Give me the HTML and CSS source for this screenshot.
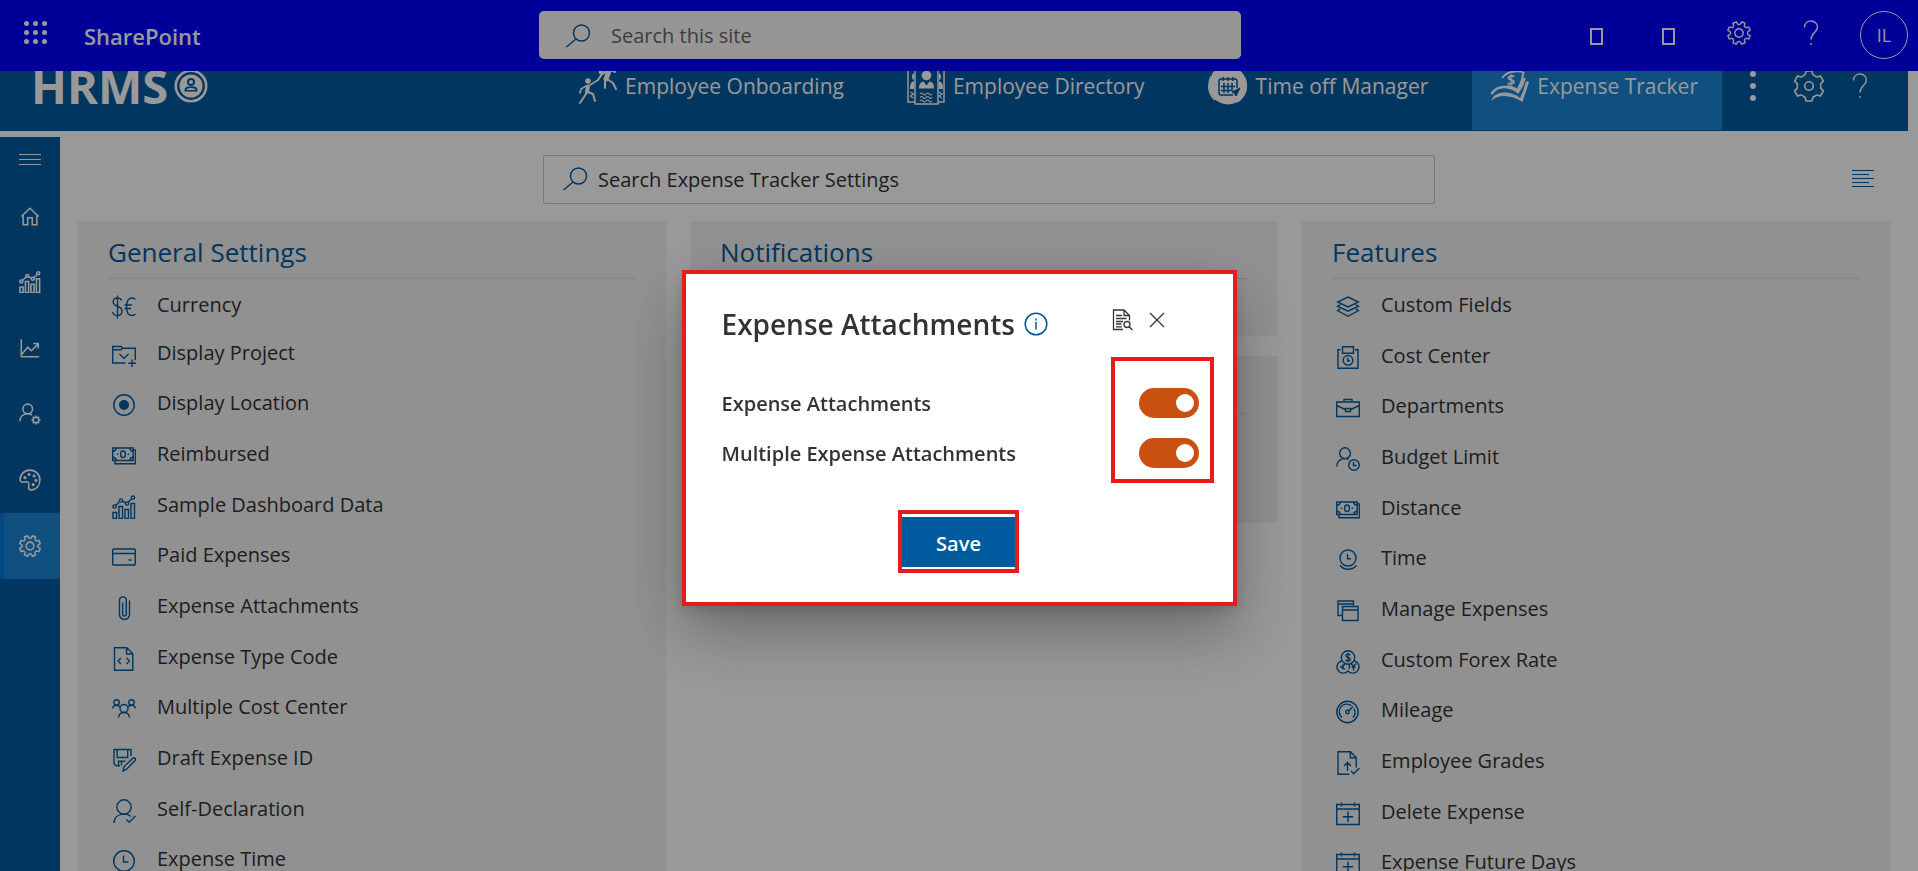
FILE: index.html
```html
<!DOCTYPE html>
<html lang="en">
<head>
<meta charset="utf-8">
<title>Expense Tracker Settings</title>
<link rel="stylesheet" href="styles.css">
</head>
<body>
<svg class="sprite" aria-hidden="true">
  <defs>
    <path id="tooth8" d="M-3.3-7.9Q-2.4-8.2-2.2-8.8L-1.8-11.3H1.8L2.2-8.8Q2.4-8.2 3.3-7.9"/>
    <path id="tooth6" d="M-5.6-9.7Q-3.9-9.9-3.5-11L-2.7-14H2.7L3.5-11Q3.9-9.9 5.6-9.7"/>
  </defs>
  <symbol id="gear8" viewBox="-12 -12 24 24">
    <g transform="rotate(22.5)"><use href="#tooth8"/><use href="#tooth8" transform="rotate(45)"/><use href="#tooth8" transform="rotate(90)"/><use href="#tooth8" transform="rotate(135)"/><use href="#tooth8" transform="rotate(180)"/><use href="#tooth8" transform="rotate(225)"/><use href="#tooth8" transform="rotate(270)"/><use href="#tooth8" transform="rotate(315)"/></g>
    <circle r="4.2"/>
  </symbol>
  <symbol id="gear6" viewBox="-15 -15 30 30">
    <use href="#tooth6"/><use href="#tooth6" transform="rotate(60)"/><use href="#tooth6" transform="rotate(120)"/><use href="#tooth6" transform="rotate(180)"/><use href="#tooth6" transform="rotate(240)"/><use href="#tooth6" transform="rotate(300)"/>
    <circle r="4"/>
  </symbol>
  <symbol id="help" viewBox="0 0 16 26"><path d="M1.5 7.5C1.5 3.5 4.3 1 8 1s6.500 2.500 6.500 6C14.500 12.500 8 12.500 8 19.500"/><path d="M8 23v2"/></symbol>
  <symbol id="search" viewBox="0 0 26 24"><circle cx="16.500" cy="9" r="8"/><path d="M11 15L1.500 23"/></symbol>
  <symbol id="home" viewBox="0 0 24 24"><path d="M2.500 12.500L12 3.500l9.500 9M4.500 11v10.500h5V14h5v7.500h5V11"/></symbol>
  <symbol id="chart" viewBox="0 0 24 24"><path d="M1 17.500h3.500v6H1zM7 11.500h3.500v12H7zM13 14.500h3.500v9H13zM19 8.500h3.500v15H19z"/><circle cx="2.500" cy="11.500" r="1.600"/><circle cx="9" cy="5.500" r="1.600"/><circle cx="15" cy="8.500" r="1.600"/><circle cx="21" cy="2.500" r="1.600"/><path d="M3.700 10.400l4-3.800M10.500 6.200l3 1.600M16.200 7.300l3.700-3.700"/></symbol>
  <symbol id="trend" viewBox="0 0 24 24"><path d="M2.500 2.500v19H22M3 19l6.500-8 4 4L21 7.500M15.500 7H21v5.500"/></symbol>
  <symbol id="person-gear" viewBox="0 0 24 24"><circle cx="9.500" cy="6.500" r="5.300"/><path d="M1 20c0-5 3.500-8.200 8.500-8.200 2 0 3.500.5 4.700 1.400"/><circle cx="18.500" cy="18.500" r="3"/><path d="M18.500 13.500v2m0 6v2m-5-5h2m6 0h2m-8.500-3.500l1.400 1.400m4.200 4.200l1.400 1.400m0-7l-1.400 1.400m-4.200 4.200L15 22"/></symbol>
  <symbol id="palette" viewBox="0 0 24 24"><path d="M12 1.200c6.200 0 10.800 4.600 10.800 10.800S19 22.800 13.500 22.800c-2.200 0-3.300-1.200-3-3 .3-1.600.6-3 .1-4.200-.7-1.800-2.600-2-4.600-1.500-2.800.7-4.800 0-4.800-2.300C1.200 5.800 5.800 1.200 12 1.200z"/><g fill="currentColor"><circle cx="6.500" cy="9.500" r=".9"/><circle cx="11" cy="6" r=".9"/><circle cx="16.500" cy="7.500" r=".9"/><circle cx="18.500" cy="12.500" r=".9"/><circle cx="15.500" cy="17" r=".9"/></g></symbol>
  <symbol id="currency" viewBox="0 0 24 24"><path d="M9.500 5.500C9 3.800 7.500 3 5.500 3 3 3 1.200 4.500 1.200 7c0 5.500 8.800 3 8.800 9 0 2.800-2 4.500-4.700 4.500C2.800 20.500 1 19.200.8 17M5.500.5v23M23.500 4.500C22.500 3.400 21.300 3 20 3c-4 0-5.500 4-5.500 8.800s1.500 8.700 5.500 8.700c1.300 0 2.500-.4 3.500-1.500M12.500 10h7.500M12.500 13.500h6.500"/></symbol>
  <symbol id="folder" viewBox="0 0 24 24"><path d="M13.500 20H.7V3.500h8.500l1.300 1.700h12.800v12M.7 6.800h8.500l1.300-1.600M7.500 11l4.500 4.300 4.500-4.300M20 16.500v7.500M16.300 20.200H24"/></symbol>
  <symbol id="radio" viewBox="0 0 24 24"><circle cx="12" cy="12" r="10.200"/><circle cx="12" cy="12" r="4.300" fill="currentColor"/></symbol>
  <symbol id="money" viewBox="0 0 24 24"><path d="M.7 4h20.500v12.500H.7zM21.200 6h2.200v13.800H3v-3.300M.7 7.500Q4 7.200 4.200 4M17.700 4Q18 7.200 21.200 7.500M.7 13Q4 13.300 4.200 16.500M17.700 16.500Q18 13.300 21.200 13M4.800 10.200h1.400M15.700 10.200h1.400"/><rect x="8.700" y="7" width="4.600" height="6.500" rx="2.300"/></symbol>
  <symbol id="card" viewBox="0 0 24 24"><rect x=".7" y="4" width="22.600" height="16" rx="1"/><path d="M.7 8.500h22.600M16.500 15h3"/></symbol>
  <symbol id="clip" viewBox="0 0 24 24"><path d="M17.500 4.500v14a5 5 0 0 1-10 0V4.300a3.400 3.400 0 0 1 6.800 0v14a1.800 1.800 0 0 1-3.600 0V6.500"/></symbol>
  <symbol id="code-file" viewBox="0 0 24 24"><path d="M2.500.7h12.300l6 6v16.600H2.500zM14.500.7v6.300h6.300M9 11l-3 3 3 3M14.500 11l3 3-3 3"/></symbol>
  <symbol id="people" viewBox="0 0 24 24"><circle cx="12" cy="11.500" r="4"/><path d="M6.500 20.500c.3-3 2.400-5 5.500-5s5.200 2 5.500 5"/><circle cx="4.500" cy="5.500" r="2.700"/><circle cx="19.500" cy="5.500" r="2.700"/><path d="M.7 11.500c.2-2 1.700-3.300 3.800-3.300 1.600 0 2.800.7 3.500 1.900M23.300 11.500c-.2-2-1.700-3.300-3.800-3.300-1.600 0-2.800.7-3.500 1.900"/></symbol>
  <symbol id="save-edit" viewBox="0 0 24 24"><path d="M19 8V1.500H2v14.200l2.200 2.200H8M5.200 1.500v8h10.500v-8M6.500 17.500v-4.300h7M9.500 14v3.500M11 23l1-4.200 9-8.800c1.500-1 3.300 1 2 2.500l-8.600 9z"/></symbol>
  <symbol id="person-check" viewBox="0 0 24 24"><circle cx="12" cy="8" r="7.200"/><path d="M2 24c0-5.500 4-8.900 10-8.900 3 0 5.300.8 7 2.300M14.500 20.500l2.700 2.700 6.300-6.300"/></symbol>
  <symbol id="clock" viewBox="0 0 24 24"><circle cx="12" cy="12" r="10.300"/><path d="M11.500 6.500v6.500h5"/></symbol>
  <symbol id="layers" viewBox="0 0 24 24"><path d="M12 2l10.500 5L12 12 1.500 7zM4.500 9.500l-3 1.700L12 16.200l10.500-5-3-1.700M4.500 13.800l-3 1.700L12 21.300l10.500-5.800-3-1.700"/></symbol>
  <symbol id="cost" viewBox="0 0 24 24"><path d="M4.500 3.700H2v18.500h20V3.700h-3M6.500.8h11v6.500h-11z"/><circle cx="12" cy="14.300" r="4.800"/><path d="M11.700 11.800v2.900h2.300"/></symbol>
  <symbol id="case" viewBox="0 0 24 24"><path d="M.7 6h22.600v14.500H.7zM8 6V3.500h8V6M.7 9.500l8.800 4.200M23.300 9.500l-8.800 4.200M9.500 12.500h5V15.500h-5z"/></symbol>
  <symbol id="person-clock" viewBox="0 0 24 24"><circle cx="9" cy="6.200" r="5.400"/><path d="M.7 19.500c0-5 3.300-7.900 8.300-7.900 1.500 0 2.800.3 3.800.8"/><circle cx="18" cy="18" r="5.300"/><path d="M17.500 15v3.500H20.500"/></symbol>
  <symbol id="time" viewBox="0 0 24 24"><circle cx="12" cy="10" r="8"/><path d="M11.500 6v4.700h3.500M4 17.500c4 5 12 5 16.500 0"/></symbol>
  <symbol id="windows" viewBox="0 0 24 24"><path d="M6 16.500H2V2h15.500v4.500M2 5h15.500M6.500 7.500h15.500v14H6.500zM6.500 11h15.500"/></symbol>
  <symbol id="forex" viewBox="0 0 24 24"><circle cx="12" cy="7.500" r="6.700"/><path d="M5.800 10.700a6.300 6.300 0 1 0 6.200 10.300 6.300 6.300 0 1 0 6.200-10.300M14.300 5.200C13.500 3.700 9.800 3.700 9.800 5.700s4.600 1.500 4.600 3.600-3.900 2.200-4.900.5M12 2.700v9.500M9 15c-3-1.200-4.500 4.500 0 4M4 17h4M15 13.500l2.500 3 2.500-3M17.500 16.500v4M15.500 17h4M13.300 14.500v4.500"/></symbol>
  <symbol id="gauge" viewBox="0 0 24 24"><circle cx="11.500" cy="12" r="10.700"/><path d="M6 17.500a7.500 7.500 0 0 1 9.500-11.700M17.800 8.500a7.500 7.500 0 0 1-.8 9M12.700 10.800L17 6.500"/><circle cx="11.500" cy="12" r="1.700"/></symbol>
  <symbol id="grade" viewBox="0 0 24 24"><path d="M13.500 23.200H2V.8h12.500l5.700 5.700v10M14.300.8v6h6M11.500 20v-8.500M8 15l3.500-3.700L15 15M15 20l2.700 2.700 5.800-5.800"/></symbol>
  <symbol id="cal-add" viewBox="0 0 24 24"><path d="M.7 2.500h22.600v20H.7zM.7 7h22.600M5.500.5v4M18.500.5v4M12 9.500v10.500M6.800 14.700h10.400"/></symbol>
</svg>

<header class="suite-bar">
  <button class="icon-btn waffle" aria-label="App launcher"><svg width="24" height="24" viewBox="0 0 24 24" fill="currentColor"><circle cx="2.500" cy="2.500" r="2.500"/><circle cx="11.500" cy="2.500" r="2.500"/><circle cx="20.500" cy="2.500" r="2.500"/><circle cx="2.500" cy="11.500" r="2.500"/><circle cx="11.500" cy="11.500" r="2.500"/><circle cx="20.500" cy="11.500" r="2.500"/><circle cx="2.500" cy="20.500" r="2.500"/><circle cx="11.500" cy="20.500" r="2.500"/><circle cx="20.500" cy="20.500" r="2.500"/></svg></button>
  <a class="suite-name" href="#">SharePoint</a>
  <label class="site-search"><svg class="ico" width="26" height="24"><use href="#search"/></svg><input type="text" placeholder="Search this site" aria-label="Search this site"></label>
  <div class="suite-actions">
    <button class="icon-btn glyph" aria-label="Chat"><span class="tofu"></span></button>
    <button class="icon-btn glyph" aria-label="Notifications"><span class="tofu"></span></button>
    <button class="icon-btn raised" aria-label="Settings"><svg class="ico" width="24" height="24"><use href="#gear8"/></svg></button>
    <button class="icon-btn raised" aria-label="Help"><svg class="ico" width="16" height="26"><use href="#help"/></svg></button>
    <button class="avatar">IL</button>
  </div>
</header>

<div class="app-bar">
  <a class="brand" href="#">HRMS<svg width="34" height="34" viewBox="0 0 34 34"><circle cx="17" cy="17" r="15.200" fill="none" stroke="currentColor" stroke-width="2.600"/><circle cx="17" cy="17" r="11.500" fill="currentColor"/><g fill="#005a9e"><circle cx="17" cy="13" r="4"/><path d="M10.500 22.500c0-5 2-5 6.500-5s6.500 0 6.500 5z"/></g><circle cx="17" cy="13" r="2" fill="currentColor"/><path d="M12.500 21q0-2 4.500-2t4.500 2z" fill="currentColor"/></svg></a>
  <nav class="app-nav">
    <a href="#"><svg width="40" height="40" viewBox="0 0 40 40" fill="none" stroke="currentColor" stroke-linecap="round" stroke-linejoin="round"><circle cx="23.500" cy="6" r="2.800" fill="currentColor" stroke="none"/><circle cx="10" cy="15" r="2.800" fill="currentColor" stroke="none"/><path d="M31 5l-3 8" stroke-width="5"/><path d="M30 5l-6 3-4 6M33 4l4 2" stroke-width="2"/><path d="M27 14l0 8M29 13l6 4 3 6" stroke-width="2"/><path d="M10 20.500l-1 5" stroke-width="4"/><path d="M12 19l8-5M8 20l-5 3-1 4" stroke-width="1.600"/><path d="M9 26l-3 5-4 6M10 26l5 2 2 7" stroke-width="2"/></svg>Employee Onboarding</a>
    <a href="#"><svg width="40" height="40" viewBox="0 0 40 40" fill="none" stroke="currentColor" stroke-width="1.500"><path d="M9 2h23v36H9zM9 2H2v34h7M32 2h6v34h-6"/><g fill="currentColor" stroke="none"><circle cx="20.500" cy="9.500" r="4.800"/><path d="M13 22.500c0-5 2-6.500 4.500-7l3 4 3-4c3 .5 4.500 2 4.500 7zM8 7a4 4 0 0 0 0 7zM33 7a4 4 0 0 1 0 7zM8 15c-3 1-4 3-4 8h4zM33 15c3 1 4 3 4 8h-4z"/></g><path d="M14 28q1.500-2 3 0t3 0 3 0 3 0M14 31.500q1.500-2 3 0t3 0 3 0 3 0M14 35q1.500-2 3 0t3 0 3 0 3 0M4.500 26l3 2-3 2 3 2M33 26l3 2-3 2 3 2" stroke-width="1.200"/></svg>Employee Directory</a>
    <a href="#"><svg width="42" height="40" viewBox="0 0 42 40"><circle cx="21" cy="19.500" r="19" fill="currentColor"/><path d="M4 10Q-2 25 8 34M9 4l-4 5M31 4q13 12 6 25-3 5-7 7" fill="none" stroke="currentColor" stroke-width="1.500"/><g fill="none" stroke="#005a9e" stroke-width="1.500"><path d="M26 29H14q-2 0-2-2V15q0-2 2-2h14q2 0 2 2v7M16 11v4M21 11v4M26 11v4M14 20.500h14M14 24.500h11M17 17v10M21 17v10M25 17v8"/><path d="M25 26l8-4-4 8-2-3z" fill="#005a9e" stroke-width="1"/></g></svg>Time off Manager</a>
    <a class="active" href="#"><svg width="40" height="40" viewBox="0 0 40 40" fill="none" stroke="currentColor"><path d="M12 12Q17 5.500 25 5.500q5-.5 8.500 1Q32 16 27.500 24q-4-3-11-4" stroke-width="1.800"/><path d="M1.500 28Q6 20.500 15 21q7 .3 13 5 4.500-6 6.500-14" stroke-width="2.600"/><path d="M1 35Q3 27 14 26.500q9 0 16 5.500 4-8 6-17l3 1-6.500 20Q24 30 14 30 6 30 1 35z" fill="currentColor" stroke="none"/><text x="17" y="19" class="nav-dollar" fill="currentColor" stroke="none">$</text></svg>Expense Tracker</a>
  </nav>
  <div class="app-actions">
    <button class="icon-btn" aria-label="More"><svg width="8" height="30" viewBox="0 0 8 30" fill="currentColor"><circle cx="4" cy="3" r="3"/><circle cx="4" cy="15" r="3"/><circle cx="4" cy="27" r="3"/></svg></button>
    <button class="icon-btn" aria-label="App settings"><svg class="ico ico-bold" width="32" height="32"><use href="#gear6"/></svg></button>
    <button class="icon-btn" aria-label="App help"><svg class="ico" width="16" height="26"><use href="#help"/></svg></button>
  </div>
</div>

<div class="body">
  <nav class="rail">
    <button class="icon-btn burger" aria-label="Menu"><span></span><span></span><span></span></button>
    <a href="#" aria-label="Home"><svg class="ico"><use href="#home"/></svg></a>
    <a href="#" aria-label="Dashboard"><svg class="ico"><use href="#chart"/></svg></a>
    <a href="#" aria-label="Reports"><svg class="ico"><use href="#trend"/></svg></a>
    <a href="#" aria-label="Users"><svg class="ico"><use href="#person-gear"/></svg></a>
    <a href="#" aria-label="Theme"><svg class="ico"><use href="#palette"/></svg></a>
    <a class="active" href="#" aria-label="Settings"><svg class="ico"><use href="#gear8"/></svg></a>
  </nav>
  <main>
    <div class="toolbar">
      <label class="settings-search"><svg class="ico" width="26" height="24"><use href="#search"/></svg><input type="text" placeholder="Search Expense Tracker Settings" aria-label="Search Expense Tracker Settings"></label>
      <button class="icon-btn align-btn" aria-label="View"><svg width="22" height="18" viewBox="0 0 22 18" fill="none" stroke="currentColor"><path d="M0 1.500h22M0 5.500h17M0 9.500h22M0 13.500h17M0 17.500h22"/></svg></button>
    </div>
    <div class="columns">
      <section class="card">
        <h2>General Settings</h2>
        <ul class="tight-first">
          <li><a href="#"><svg class="ico"><use href="#currency"/></svg>Currency</a></li>
          <li><a href="#"><svg class="ico"><use href="#folder"/></svg>Display Project</a></li>
          <li><a href="#"><svg class="ico"><use href="#radio"/></svg>Display Location</a></li>
          <li><a href="#"><svg class="ico"><use href="#money"/></svg>Reimbursed</a></li>
          <li><a href="#"><svg class="ico"><use href="#chart"/></svg>Sample Dashboard Data</a></li>
          <li><a href="#"><svg class="ico"><use href="#card"/></svg>Paid Expenses</a></li>
          <li><a href="#"><svg class="ico"><use href="#clip"/></svg>Expense Attachments</a></li>
          <li><a href="#"><svg class="ico"><use href="#code-file"/></svg>Expense Type Code</a></li>
          <li><a href="#"><svg class="ico"><use href="#people"/></svg>Multiple Cost Center</a></li>
          <li><a href="#"><svg class="ico"><use href="#save-edit"/></svg>Draft Expense ID</a></li>
          <li><a href="#"><svg class="ico"><use href="#person-check"/></svg>Self-Declaration</a></li>
          <li><a href="#"><svg class="ico"><use href="#clock"/></svg>Expense Time</a></li>
        </ul>
      </section>
      <div class="stack">
        <section class="card card-small"><h2>Notifications</h2></section>
        <section class="card card-medium"><h2></h2></section>
      </div>
      <section class="card">
        <h2>Features</h2>
        <ul>
          <li><a href="#"><svg class="ico"><use href="#layers"/></svg>Custom Fields</a></li>
          <li><a href="#"><svg class="ico"><use href="#cost"/></svg>Cost Center</a></li>
          <li><a href="#"><svg class="ico"><use href="#case"/></svg>Departments</a></li>
          <li><a href="#"><svg class="ico"><use href="#person-clock"/></svg>Budget Limit</a></li>
          <li><a href="#"><svg class="ico"><use href="#money"/></svg>Distance</a></li>
          <li><a href="#"><svg class="ico"><use href="#time"/></svg>Time</a></li>
          <li><a href="#"><svg class="ico"><use href="#windows"/></svg>Manage Expenses</a></li>
          <li><a href="#"><svg class="ico"><use href="#forex"/></svg>Custom Forex Rate</a></li>
          <li><a href="#"><svg class="ico"><use href="#gauge"/></svg>Mileage</a></li>
          <li><a href="#"><svg class="ico"><use href="#grade"/></svg>Employee Grades</a></li>
          <li><a href="#"><svg class="ico"><use href="#cal-add"/></svg>Delete Expense</a></li>
          <li><a href="#"><svg class="ico"><use href="#cal-add"/></svg>Expense Future Days</a></li>
        </ul>
      </section>
    </div>
  </main>
</div>

<div class="overlay">
  <div class="dialog" role="dialog" aria-labelledby="dlg-title">
    <div class="dialog-head">
      <h1 id="dlg-title">Expense Attachments</h1>
      <button class="icon-btn info" aria-label="Info"><svg width="24" height="24" viewBox="0 0 24 24" fill="none" stroke="currentColor" stroke-width="1.500"><circle cx="12" cy="12" r="10.800"/><path d="M12 10v7.500M12 6.500v2"/></svg></button>
      <div class="dialog-tools">
        <button class="icon-btn" aria-label="Preview"><svg width="22" height="22" viewBox="0 0 22 22" fill="none" stroke="currentColor" stroke-width="1.300"><path d="M11 20.500H1.500V1H12l5.500 5.500v5M12 1v5.500h5.500M4 6.500h6M4 9.500h10.500M4 12.500h7M4 15h5.500M4 17.800h6"/><circle cx="15" cy="15.500" r="3"/><path d="M17.200 17.700l3.300 3.300"/></svg></button>
        <button class="icon-btn" aria-label="Close"><svg width="16" height="16" viewBox="0 0 16 16" fill="none" stroke="currentColor" stroke-width="1.300"><path d="M1 1l14 14M15 1L1 15"/></svg></button>
      </div>
    </div>
    <div class="fields">
      <div class="field"><label for="att">Expense Attachments</label><input class="switch" id="att" type="checkbox" role="switch" checked></div>
      <div class="field"><label for="multi">Multiple Expense Attachments</label><input class="switch" id="multi" type="checkbox" role="switch" checked></div>
    </div>
    <div class="dialog-foot"><span class="mark"><button class="save">Save</button></span></div>
  </div>
</div>
</body>
</html>
```
FILE: styles.css
```css
*, ::before, ::after { box-sizing: border-box; }

body {
  margin: 0;
  height: 100vh;
  overflow: hidden;
  display: flex;
  flex-direction: column;
  background: #fff;
  color: #333;
  font: 20px/28px "Open Sans", "Noto Sans", sans-serif;
}

a { color: inherit; text-decoration: none; }
input, button { font: inherit; color: inherit; }
.sprite { position: absolute; width: 0; height: 0; }

.ico {
  flex: none;
  width: 24px;
  height: 24px;
  fill: none;
  stroke: currentColor;
  stroke-width: 1.4;
}
.ico[width="26"] { width: 26px; }
.ico[width="16"] { width: 16px; height: 26px; }
.ico-bold { width: 32px; height: 32px; stroke-width: 1.5; }

.icon-btn {
  display: flex;
  align-items: center;
  justify-content: center;
  padding: 0;
  border: 0;
  background: none;
}

/* Suite bar */
.suite-bar {
  position: relative;
  z-index: 1;
  flex: none;
  display: grid;
  grid-template-columns: 60px 479px minmax(0, 702px) 1fr;
  align-items: center;
  height: 71px;
  padding-bottom: 1px;
  background: #00f;
  color: #fff;
}
.waffle { margin: 0 0 4px 12px; }
.suite-name { margin-left: 24px; padding-top: 2px; font-size: 22px; font-weight: 600; }
.site-search {
  display: flex;
  align-items: center;
  gap: 20px;
  height: 48px;
  padding: 2px 26px 0;
  border-radius: 5px;
  background: #fafafa;
  color: #005a9e;
}
.site-search input,
.settings-search input {
  flex: 1;
  min-width: 0;
  padding: 0;
  border: 0;
  outline: 0;
  background: none;
  color: #333;
}
.site-search input::placeholder { color: #666; opacity: 1; }
.suite-actions { display: flex; justify-content: flex-end; align-items: center; padding-right: 10px; }
.suite-actions .icon-btn { width: 72px; }
.suite-actions .raised { margin-bottom: 4px; }
.glyph { padding: 2px 0 0 2px; }
.tofu { width: 13px; height: 17px; border: 2px solid #fff; }
.avatar {
  width: 48px;
  height: 48px;
  margin-left: 13px;
  padding: 0;
  border: 1px solid #fff;
  border-radius: 50%;
  background: none;
  font-size: 18px;
}

/* Application bar, tucked under the suite bar */
.app-bar {
  flex: none;
  display: flex;
  align-items: stretch;
  height: 90px;
  margin: -30px 10px 0 0;
  padding-bottom: 1px;
  background: #005a9e;
  color: #fff;
}
.brand { display: flex; align-items: center; gap: 6px; padding-left: 31px; font-size: 47px; font-weight: 700; }
.app-nav { display: flex; gap: 20px; margin-left: auto; font-size: 21px; }
.app-nav a { display: flex; align-items: center; gap: 7px; padding: 0 24px 0 18px; }
.app-nav .active { background: #1c85d7; }
.nav-dollar { font-size: 14px; font-weight: 700; }
.app-actions { display: flex; align-items: center; gap: 36px; padding: 0 40px 0 27px; }
.app-actions .icon-btn:nth-child(2) { margin-right: -9px; }

/* Body */
.body { flex: 1; min-height: 0; display: flex; margin-top: 6px; padding-right: 10px; }
.rail { flex: none; width: 60px; background: #005a9e; color: #fff; }
.rail a { display: flex; align-items: center; justify-content: center; height: 66px; }
.rail .ico { width: 22px; height: 22px; stroke-width: 1.7; }
.rail .active {
  padding-right: 4px;
  border-left: 4px solid #0078d4;
  border-radius: 3px;
  background: #1c85d7;
}
.burger { width: 60px; height: 46px; flex-direction: column; gap: 4px; padding-top: 0; padding-bottom: 2px; }
.burger span { width: 22px; height: 1px; background: #fff; }

main { flex: 1; min-width: 0; padding: 18px; }
.toolbar {
  display: grid;
  grid-template-columns: 1fr minmax(0, 892px) 1fr;
  align-items: center;
  padding-left: 10px;
  color: #005a9e;
}
.settings-search {
  grid-column: 2;
  display: flex;
  align-items: center;
  gap: 10px;
  height: 49px;
  padding: 1px 18px 0;
  border: 1px solid #c8c8c8;
  border-radius: 2px;
}
.settings-search .ico { margin-bottom: 3px; }
.settings-search input::placeholder { color: #333; opacity: 1; }
.align-btn { justify-self: end; margin: 0 16px 4px 0; }

.columns { display: grid; grid-template-columns: repeat(3, 1fr); gap: 24px; margin-top: 17px; }
.stack { display: flex; flex-direction: column; gap: 20px; }
.card { padding: 0 30px; background: #f2f2f2; }
.card h2 {
  height: 58px;
  margin: 0;
  padding-top: 14px;
  border-bottom: 1px solid #d8d8d8;
  color: #005a9e;
  font-size: 26px;
  font-weight: 400;
  line-height: 34px;
}
.card-small { height: 115px; }
.card-medium { height: 167px; }
.card ul { margin: 0; padding: 0; list-style: none; }
.card li { height: 51px; padding-top: 12px; }
.card li:nth-child(3n + 2) { height: 50px; }
.card .tight-first li:first-child { height: 48px; }
.card li a { display: flex; align-items: flex-start; gap: 21px; padding-left: 4px; }
.card li .ico { margin-top: 4px; color: #005a9e; }

/* Dialog */
.overlay {
  position: fixed;
  inset: 0;
  z-index: 2;
  display: flex;
  align-items: center;
  justify-content: center;
  padding-top: 5px;
  background: rgba(0, 0, 0, .4);
}
.dialog {
  width: min(555px, 100%);
  padding: 32px 19px 29px 36px;
  border: 4px solid #e81a1c;
  background: #fff;
  box-shadow: 0 26px 58px rgba(0, 0, 0, .3), 0 5px 14px rgba(0, 0, 0, .14);
}
.dialog-head { display: flex; align-items: center; height: 36px; }
.dialog-head h1 { margin: 0; font-size: 28px; font-weight: 600; line-height: 36px; }
.info { margin: 0 0 0 9px; color: #005a9e; }
.dialog-tools { display: flex; align-items: center; gap: 15px; margin: 0 49px 9px auto; }

.fields {
  position: relative;
  display: grid;
  gap: 20px;
  margin-top: 46px;
  padding-right: 15px;
}
/* red frame round the switches */
.fields::after {
  content: "";
  position: absolute;
  top: -31px;
  right: 0;
  width: 103px;
  height: 126px;
  border: 4px solid #e81a1c;
  pointer-events: none;
}
.field { display: flex; align-items: center; justify-content: space-between; height: 30px; font-weight: 600; }
.field label { padding-top: 1px; }
.switch {
  appearance: none;
  display: flex;
  justify-content: flex-end;
  align-items: center;
  width: 60px;
  height: 30px;
  margin: 0;
  padding: 0 5px;
  border-radius: 15px;
  background: #ca5010;
}
.switch::before { content: ""; width: 18px; height: 18px; border-radius: 50%; background: #fff; }

.dialog-foot { display: flex; justify-content: center; margin: 42px 18px 0 0; }
.mark { display: flex; padding: 3px 0 2px; border: 4px solid #e81a1c; }
.save {
  width: 113px;
  height: 50px;
  padding: 4px 0 0;
  border: 0;
  background: #005a9e;
  color: #fff;
  font-weight: 600;
}
```
